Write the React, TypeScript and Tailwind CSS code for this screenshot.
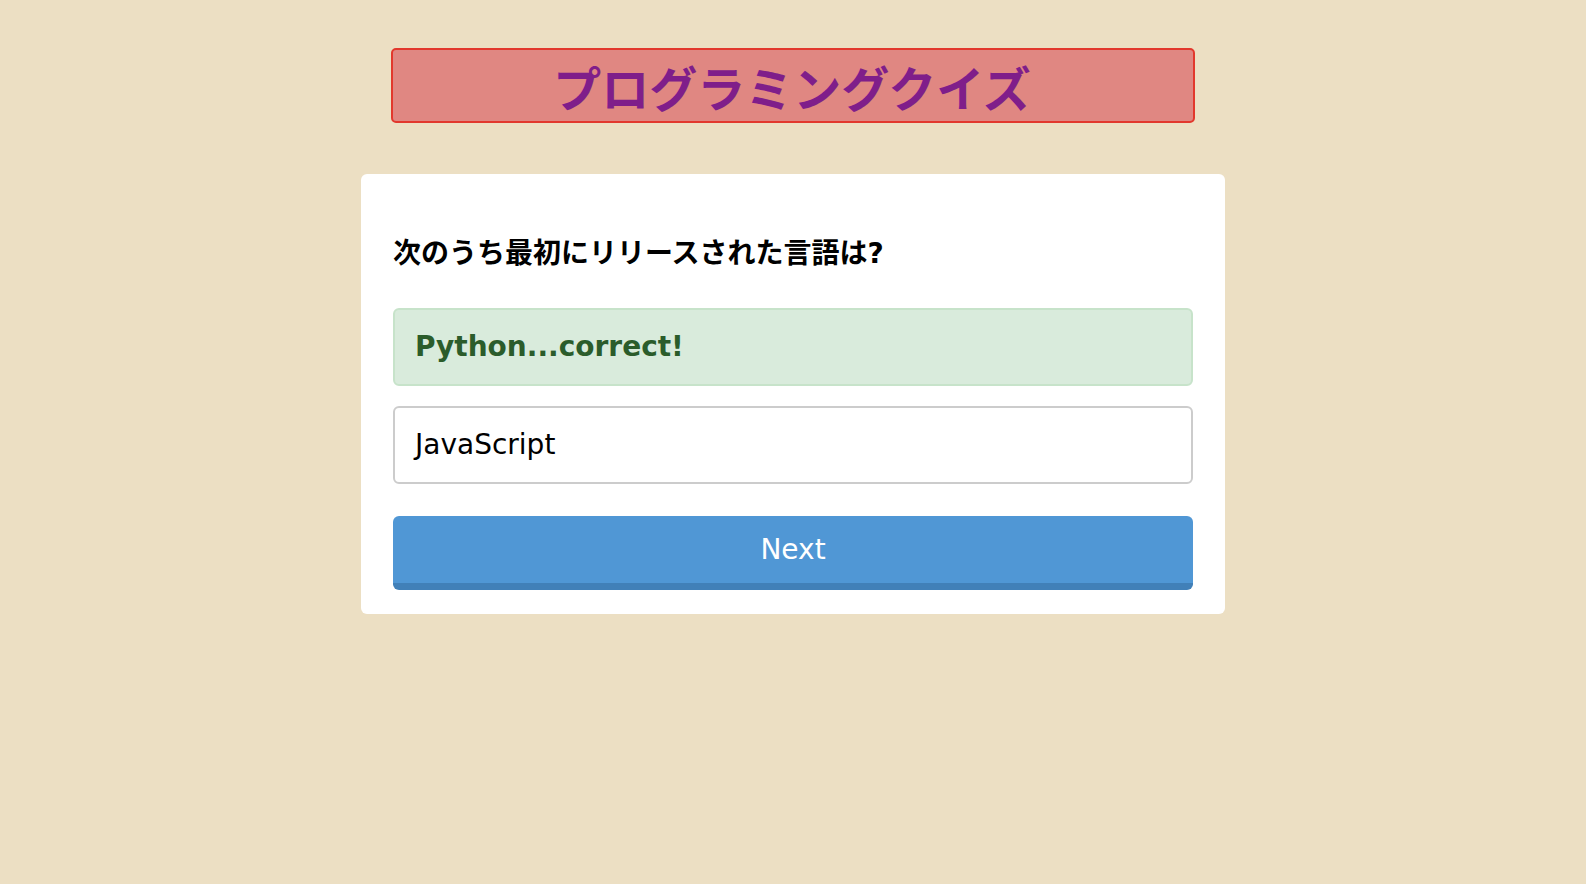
import React from 'react'

const options = [
  { label: 'Python...correct!', state: 'correct' },
  { label: 'JavaScript', state: 'idle' },
]

export default function App() {
  return (
    <div className="min-h-screen w-full bg-[#ecdfc3] pt-12 font-['DejaVu_Sans','Noto_Sans_CJK_JP',sans-serif]">
      {/* Title */}
      <div className="mx-auto flex h-[75px] w-[804px] items-center justify-center rounded-[5px] border-2 border-[#e2382d] bg-[#e08782]">
        <h1 className="-translate-x-[1px] font-['Noto_Sans_CJK_JP',sans-serif] text-[48px] font-bold leading-none text-[#7f1e8a]">
          プログラミングクイズ
        </h1>
      </div>

      {/* Quiz card */}
      <div className="mx-auto mt-[51px] w-[864px] rounded-[6px] bg-white px-8 pt-[62px] pb-6">
        <h2 className="text-[28px] font-bold leading-[36px] text-black">
          次のうち最初にリリースされた言語は?
        </h2>

        <ul className="mt-9 flex flex-col gap-5">
          {options.map((opt) =>
            opt.state === 'correct' ? (
              <li
                key={opt.label}
                className="rounded-[6px] border-2 border-[#c7e3ca] bg-[#d9ebdc] px-5 py-5 text-[28px] font-bold leading-[34px] text-[#2b5c2b]"
              >
                {opt.label}
              </li>
            ) : (
              <li
                key={opt.label}
                className="rounded-[6px] border-2 border-[#cccccc] bg-white px-5 py-5 text-[28px] leading-[34px] text-black"
              >
                {opt.label}
              </li>
            )
          )}
        </ul>

        <button className="mt-8 h-[74px] w-full rounded-[6px] border-b-[7px] border-[#4180b8] bg-[#5097d5] text-[28px] leading-none text-white">
          Next
        </button>
      </div>
    </div>
  )
}
